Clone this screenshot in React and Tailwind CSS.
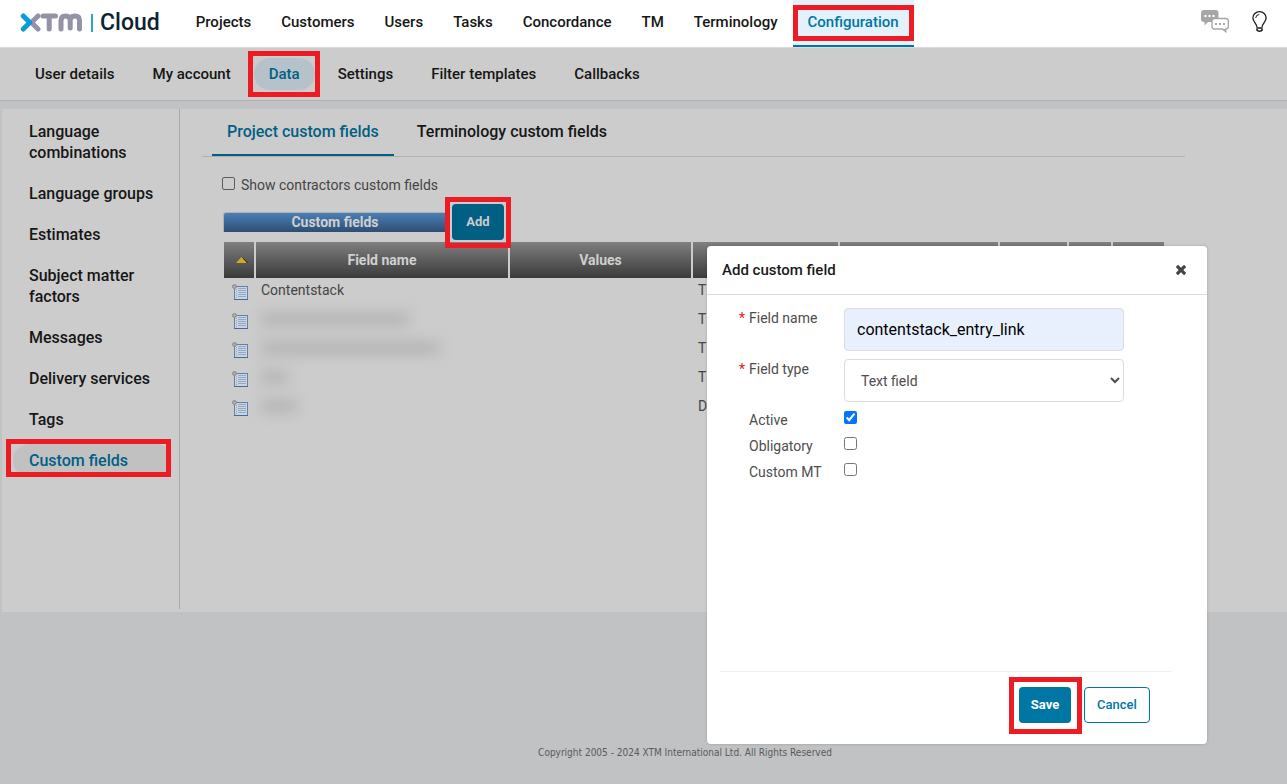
import { useState } from 'react';

const mainNav = ['Projects', 'Customers', 'Users', 'Tasks', 'Concordance', 'TM', 'Terminology', 'Configuration'];
const subNav = ['User details', 'My account', 'Data', 'Settings', 'Filter templates', 'Callbacks'];
const sideNav = [
  'Language combinations',
  'Language groups',
  'Estimates',
  'Subject matter factors',
  'Messages',
  'Delivery services',
  'Tags',
  'Custom fields',
];

// rows without a name are redacted, bar is the width of the smudge
const rows = [
  { id: 1, name: 'Contentstack', type: 'T' },
  { id: 2, bar: 'w-[148px]', type: 'T' },
  { id: 3, bar: 'w-[178px]', type: 'T' },
  { id: 4, bar: 'w-[26px]', type: 'T' },
  { id: 5, bar: 'w-[36px]', type: 'D' },
];

function Highlight({ className }) {
  return <span className={`absolute border-[5px] border-[#ed1c24] pointer-events-none ${className}`} />;
}

function Logo() {
  return (
    <a href="#" className="flex items-center pb-[2px]" aria-label="XTM Cloud">
      <svg width="63" height="19" viewBox="0 0 62 19" fill="none" strokeWidth="5" strokeLinecap="round" strokeLinejoin="round">
        <path d="M17.5 3L11 9.5L17.5 16" stroke="#9492a6" />
        <path d="M2.8 3L9.3 9.5L2.8 16" stroke="#0b9bd7" />
        <path d="M22.5 3H35M28.7 3V16" stroke="#9492a6" />
        <path d="M40.5 16V7.5Q40.5 3 45 3Q49.700 3 49.700 7.500V15V7.500Q49.700 3 54.500 3Q59 3 59 7.500V16" stroke="#9492a6" />
      </svg>
      <span className="w-[2px] h-[18px] bg-[#2ba3d4] ml-2 mr-[7px]" />
      <span className="text-[23px] leading-6 font-medium text-[#0b2430]">Cloud</span>
    </a>
  );
}

function ChatIcon() {
  return (
    <svg width="28" height="23" viewBox="0 0 28 23">
      <path d="M3 0H14.500Q17.500 0 17.500 3V9Q17.500 12 14.500 12H7L3.500 15.500V12H3Q0 12 0 9V3Q0 0 3 0Z" fill="#a6a6a6" />
      <g fill="#fff">
        <rect x="3.500" y="5" width="2" height="2" />
        <rect x="7.500" y="5" width="2" height="2" />
        <rect x="11.500" y="5" width="2" height="2" />
      </g>
      <path d="M13.500 8.500H24.500Q27.300 8.500 27.300 11V16.500Q27.300 19 24.800 19V21.700L21.500 19H13.500Q11 19 11 16.500V11Q11 8.500 13.500 8.500Z" fill="#fff" stroke="#a6a6a6" strokeWidth="1.300" />
      <path d="M21 19H25V22.500Z" fill="#a6a6a6" />
      <g fill="#a6a6a6">
        <rect x="14" y="13" width="2" height="2" />
        <rect x="18" y="13" width="2" height="2" />
        <rect x="22" y="13" width="2" height="2" />
      </g>
    </svg>
  );
}

function BulbIcon() {
  return (
    <svg width="15" height="21" viewBox="0 0 15 21" fill="none" stroke="#1c1c1c" strokeWidth="1.300">
      <path d="M5 16.300C5 12.500 0.900 11 0.900 6.900A6.600 6.200 0 0 1 14.100 6.900C14.100 11 10 12.500 10 16.300" />
      <path d="M3.700 7A3.800 3.800 0 0 1 7.300 3.500" strokeWidth="1" />
      <path d="M4.300 17H10.700M5 18V19.200Q5.500 20.200 7.500 20.200T10 19.200V18" strokeWidth="1.600" />
    </svg>
  );
}

function RowIcon() {
  return (
    <svg width="16" height="16" viewBox="0 0 16 16">
      <g shapeRendering="crispEdges">
        <rect x="2.500" y="2.500" width="13" height="13" fill="#d0d4da" stroke="#5a82b8" />
        <path d="M2 15.500H16" stroke="#416a9f" />
        <path d="M6 4.500H14M6 6.500H14M6 8.500H14M6 10.500H14M6 12.500H14" stroke="#8fa9ca" />
        <path d="M4.500 5V14" stroke="#8fa9ca" strokeDasharray="1 1" />
      </g>
      <circle cx="2.500" cy="2.500" r="2" fill="#aaa" stroke="#8c8c8c" />
    </svg>
  );
}

function Required() {
  return <span className="w-[10px] shrink-0 text-[#e02020]">*</span>;
}

function CheckRow({ id, label, checked, onChange }) {
  return (
    <div className="flex items-start h-[26px]">
      <label htmlFor={id} className="w-[95px] leading-[18px]">{label}</label>
      <input id={id} type="checkbox" checked={checked} onChange={onChange} className="w-[13px] h-[13px]" />
    </div>
  );
}

function AddFieldDialog() {
  const [name, setName] = useState('contentstack_entry_link');
  const [flags, setFlags] = useState({ active: true, obligatory: false, mt: false });
  const toggle = (key) => setFlags({ ...flags, [key]: !flags[key] });

  return (
    <form
      role="dialog"
      aria-labelledby="dialog-title"
      onSubmit={(e) => e.preventDefault()}
      className="absolute right-20 top-[246px] w-[500px] min-h-[498px] flex flex-col bg-white rounded shadow-[0_0_3px_rgba(0,0,0,0.2)] text-sm font-normal text-[#4d4d4d]"
    >
      <div className="h-[49px] flex items-center justify-between pl-[15px] pr-[21px] border-b border-[#dcdcdc]">
        <h2 id="dialog-title" className="pt-px text-[15px] font-medium text-[#1a1a1a]">Add custom field</h2>
        <button type="button" aria-label="Close">
          <svg width="10" height="10" viewBox="302 366 1188 1188" fill="#444">
            <path d="M1490 1322q0 40-28 68l-136 136q-28 28-68 28t-68-28l-294-294-294 294q-28 28-68 28t-68-28l-136-136q-28-28-28-68t28-68l294-294-294-294q-28-28-28-68t28-68l136-136q28-28 68-28t68 28l294 294 294-294q28-28 68-28t68 28l136 136q28 28 28 68t-28 68l-294 294 294 294q28 28 28 68z" />
          </svg>
        </button>
      </div>

      <div className="flex-1 pt-[13px] pl-8">
        <div className="flex mb-2">
          <Required />
          <label htmlFor="field-name" className="w-[95px] leading-5">Field name</label>
          <input
            id="field-name"
            type="text"
            value={name}
            onChange={(e) => setName(e.target.value)}
            className="w-[280px] h-[43px] px-3 text-base text-black bg-[#e8f0fe] border border-[#dcdcdc] rounded"
          />
        </div>
        <div className="flex mb-[9px]">
          <Required />
          <label htmlFor="field-type" className="w-[95px] leading-5">Field type</label>
          <select id="field-type" className="w-[280px] h-[43px] pl-3 bg-white border border-[#dcdcdc] rounded">
            <option>Text field</option>
          </select>
        </div>
        <div className="pl-[10px]">
          <CheckRow id="active" label="Active" checked={flags.active} onChange={() => toggle('active')} />
          <CheckRow id="obligatory" label="Obligatory" checked={flags.obligatory} onChange={() => toggle('obligatory')} />
          <CheckRow id="custom-mt" label="Custom MT" checked={flags.mt} onChange={() => toggle('mt')} />
        </div>
      </div>

      <div className="ml-[13px] mr-[35px] pt-[15px] pr-[22px] pb-[21px] flex justify-end gap-[13px] border-t border-[#f0f0f0] text-[13px] font-medium">
        <div className="relative">
          <button type="submit" className="w-[52px] h-9 bg-[#0076a4] text-white font-bold rounded">Save</button>
          <Highlight className="-left-[10px] -right-[11px] -top-[10px] -bottom-[11px]" />
        </div>
        <button type="button" className="w-[66px] h-9 border border-[#0076a4] text-[#0076a4] rounded">Cancel</button>
      </div>
    </form>
  );
}

export default function App() {
  return (
    <div className="relative min-h-screen flex flex-col bg-[#c1c2c4] font-[Roboto,sans-serif] text-[15px] font-medium text-[#161616]">
      <header className="h-12 flex items-center bg-white border-b border-[#d9d9d9] pl-5 pr-5">
        <Logo />
        <nav className="flex h-full ml-[21px]">
          {mainNav.map((item) =>
            item === 'Configuration' ? (
              <a key={item} href="#" className="relative flex items-center px-[15px] bg-[#e3f2fa] text-[#0076a4] border-b-2 border-[#0076a4]">
                {item}
                <Highlight className="inset-x-0 top-[5px] h-9" />
              </a>
            ) : (
              <a key={item} href="#" className="flex items-center px-[15px] pb-[2px]">{item}</a>
            )
          )}
        </nav>
        <div className="ml-auto flex items-center gap-[23px] pb-1">
          <button aria-label="Chat"><ChatIcon /></button>
          <button aria-label="Tips"><BulbIcon /></button>
        </div>
      </header>

      <nav className="h-[53px] flex items-center gap-2 px-5 bg-[#ccc] border-b border-[#b0b0b0]">
        {subNav.map((item) =>
          item === 'Data' ? (
            <a key={item} href="#" className="relative h-8 flex items-center px-[15px] rounded-full bg-[#b5c2c9] text-[#005f83]">
              {item}
              <Highlight className="-left-[6px] -right-[5px] -inset-y-[7px]" />
            </a>
          ) : (
            <a key={item} href="#" className="h-8 flex items-center px-[15px]">{item}</a>
          )
        )}
      </nav>

      <div className="mt-2 ml-[2px] pb-[3px] flex bg-[#ccc]">
        <aside className="w-[178px] min-h-[500px] pt-[2px] pl-[11px] pr-[7px] shrink-0 border-r border-[#a9a9a9] text-base">
          {sideNav.map((item) =>
            item === 'Custom fields' ? (
              <a key={item} href="#" className="relative block my-1 py-[6px] pl-4 leading-[21px] rounded-full bg-[#c1c1c1] text-[#005f83]">
                {item}
                <Highlight className="-left-[7px] right-px -top-[5px] bottom-0" />
              </a>
            ) : (
              <a key={item} href="#" className="block py-[10px] pl-4 leading-[21px]">{item}</a>
            )
          )}
        </aside>

        <main className="flex-1 min-w-0 ml-[22px] mr-[102px]">
          <div className="h-12 flex gap-2 pl-[10px] border-b border-[#b0b0b0] text-base">
            <a href="#" className="flex items-center px-[15px] text-[#005f83] border-b-2 border-[#005f83]">Project custom fields</a>
            <a href="#" className="flex items-center px-[15px] pb-[2px]">Terminology custom fields</a>
          </div>

          <div className="flex gap-[6px] mt-[17px] ml-5 h-5 text-sm font-normal text-[#454545]">
            <input id="contractors" type="checkbox" className="w-[13px] h-[13px] mt-[3px] appearance-none border border-[#5c5c5c] rounded-[2px]" />
            <label htmlFor="contractors" className="leading-[22px]">Show contractors custom fields</label>
          </div>

          <div className="flex items-center gap-[6px] mt-[10px] pl-[21px]">
            <div className="w-[223px] h-5 border-t border-l border-[#b0b0b0] rounded-tl-[3px] bg-linear-to-b from-[#4b80b8] to-[#2f4d73] text-center text-sm leading-[18px] font-bold text-[#d0d0d0]">
              Custom fields
            </div>
            <div className="relative">
              <button className="w-[52px] h-9 bg-[#005f83] text-[#ccc] text-[13px] font-bold rounded">Add</button>
              <Highlight className="-inset-x-[7px] -top-[7px] -bottom-2" />
            </div>
          </div>

          <table className="mt-[2px] ml-[22px] w-[942px] table-fixed text-sm font-normal text-[#454545]">
            <colgroup>
              <col className="w-8" />
              <col className="w-[254px]" />
              <col className="w-[183px]" />
              <col className="w-[147px]" />
              <col className="w-[160px]" />
              <col className="w-[69px]" />
              <col className="w-[44px]" />
              <col className="w-[53px]" />
            </colgroup>
            <thead>
              <tr className="h-9 text-[#d0d0d0]">
                {['sort', 'Field name', 'Values', '', '', '', '', ''].map((head, i) => (
                  <th key={i} className="p-0">
                    <div className="h-9 mr-[2px] flex items-center justify-center bg-linear-to-b from-[#808080] to-[#3b3b3b]">
                      {head === 'sort' ? (
                        <svg width="12" height="6" viewBox="0 0 12 6" className="ml-[6px]" role="img" aria-label="Sort">
                          <path d="M6 0L12 6H9Z" fill="#111" />
                          <path d="M5.500 0L11 6H0Z" fill="#d0a82a" />
                        </svg>
                      ) : (
                        head
                      )}
                    </div>
                  </th>
                ))}
              </tr>
            </thead>
            <tbody>
              {rows.map((row) => (
                <tr key={row.id} className="h-[29px]">
                  <td className="p-0 pb-[2px] pl-2"><RowIcon /></td>
                  <td className="p-0 pb-[6px] pl-[5px]">
                    {row.name || <div className={`h-3 bg-[#b2b2b2] blur-[7px] ${row.bar}`} />}
                  </td>
                  <td />
                  <td className="p-0 pb-[6px] pl-[5px]">{row.type}</td>
                  <td colSpan={4} />
                </tr>
              ))}
            </tbody>
          </table>
        </main>
      </div>

      <footer className="mt-[134px] pl-[83px] text-center font-['DejaVu_Sans_Condensed','DejaVu_Sans',sans-serif] text-[10px] leading-[14px] font-normal text-[#5a5a5a]">
        Copyright 2005 - 2024 XTM International Ltd. All Rights Reserved
      </footer>

      <AddFieldDialog />
    </div>
  );
}
